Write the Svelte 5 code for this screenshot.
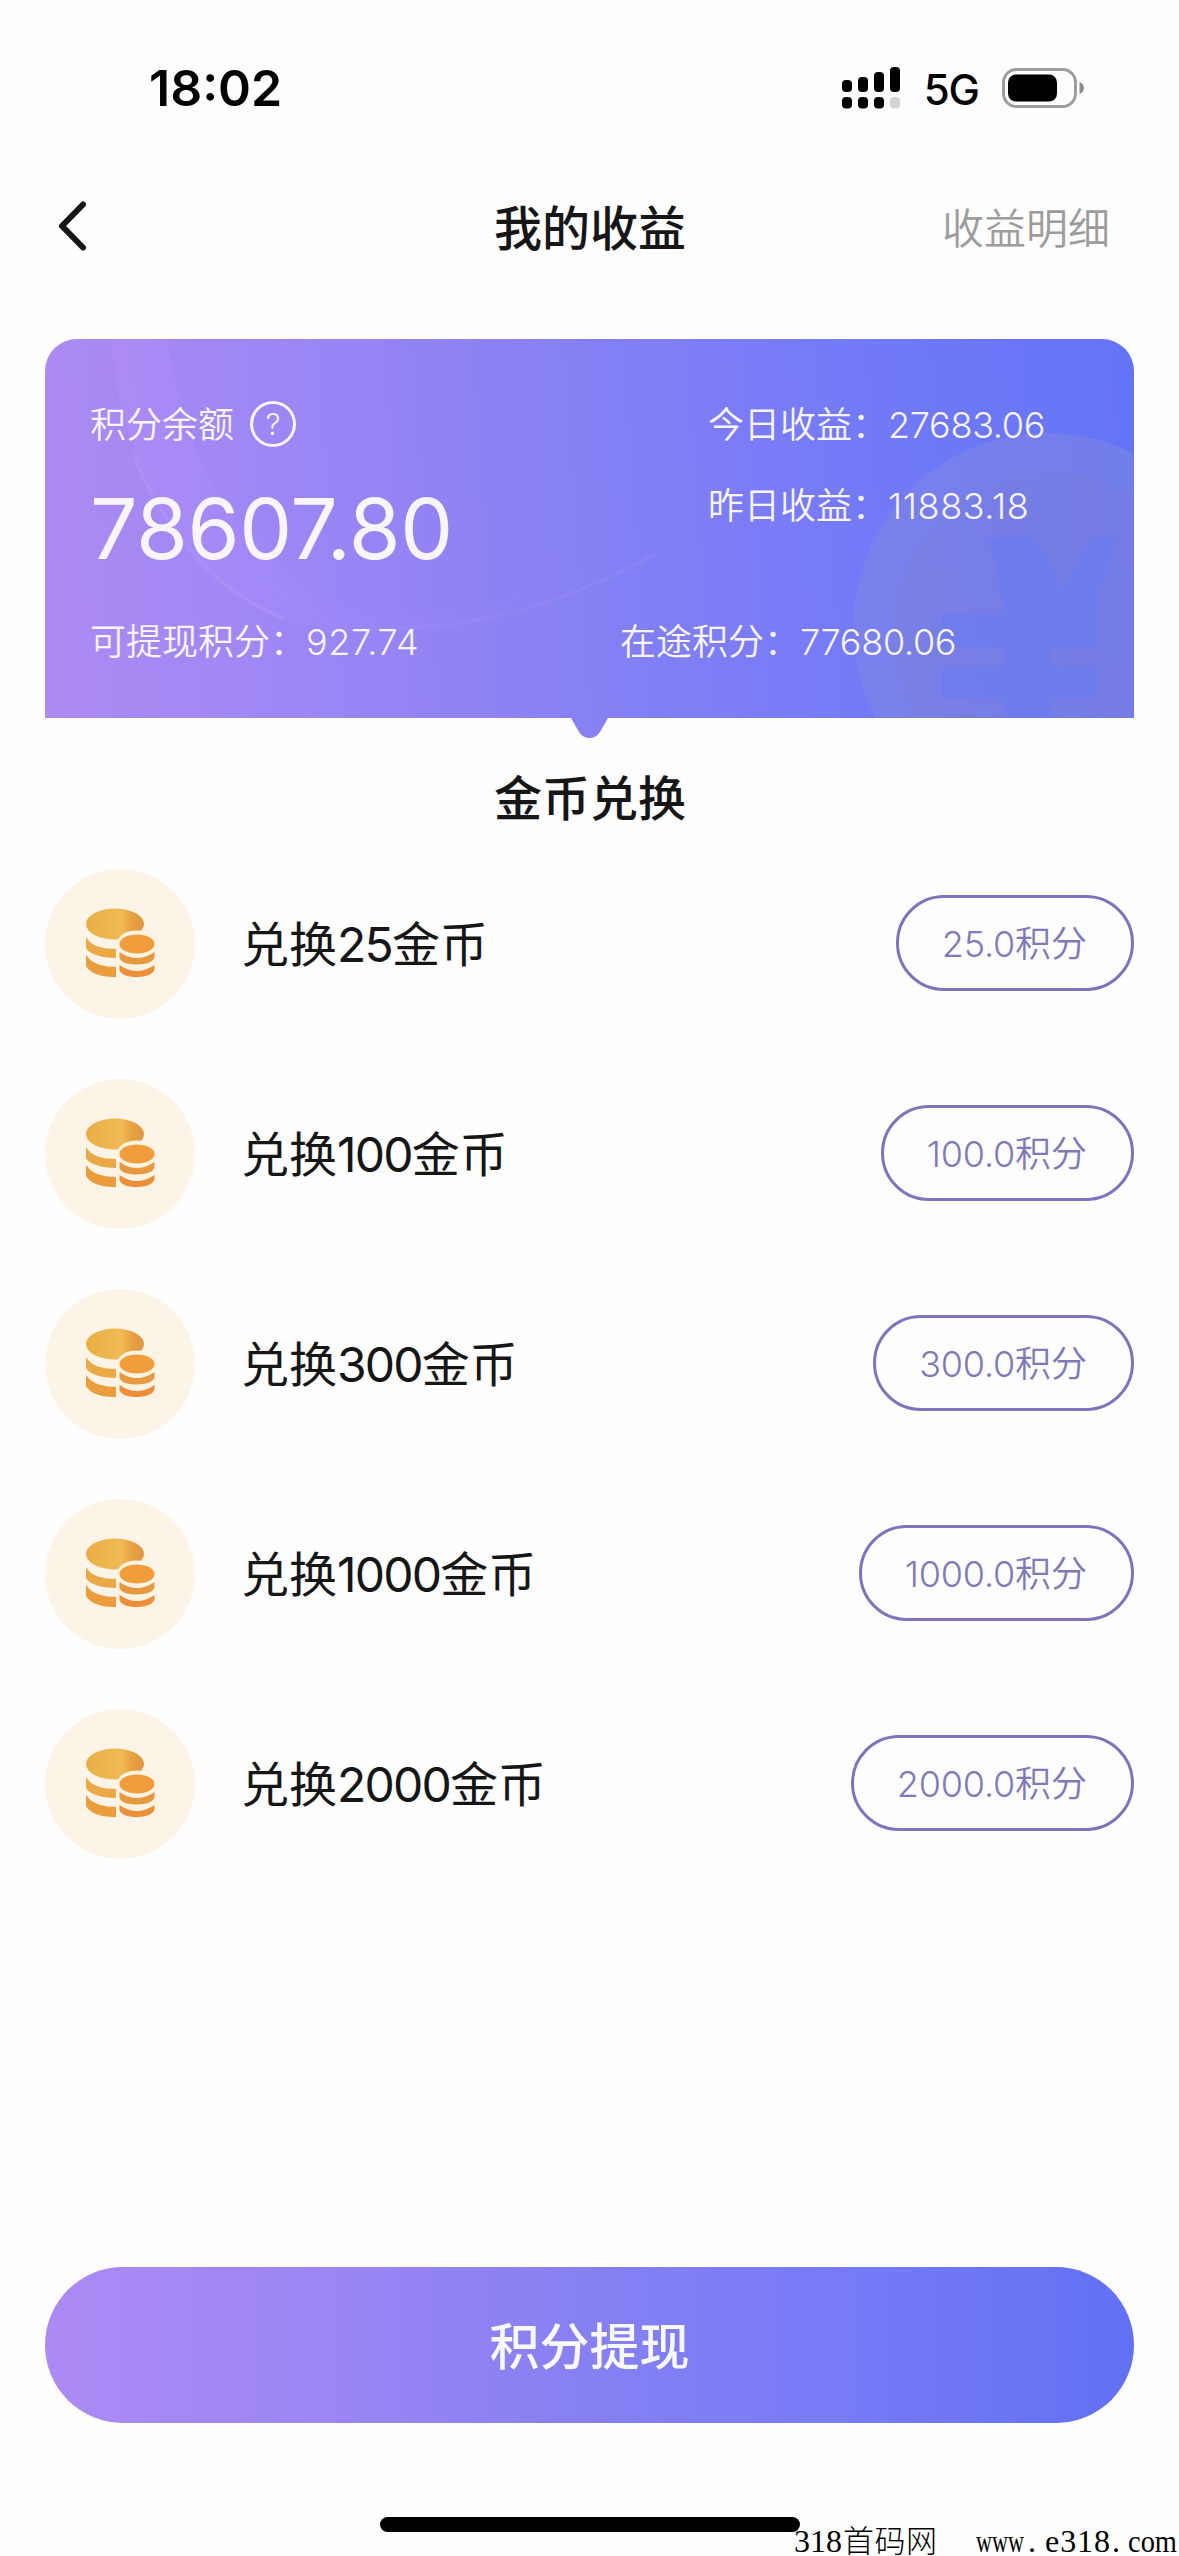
<script>
    const balance = "78607.80"
    const withdrawable = "927.74"
    const pending = "77680.06"
    const today = "27683.06"
    const yesterday = "11883.18"

    const coins = [25, 100, 300, 1000, 2000]
    const bars = [12, 15, 20, 25]
</script>

<div class="page">
    <div class="status">
        <span class="time">18:02</span>
        <div class="status-right">
            <svg class="signal" width="58" height="42" viewBox="0 0 58 42">
                {#each bars as h, i}
                    <rect x={i * 16} y={25 - h} width="10" height={h} rx="4" />
                    <rect x={i * 16} y="30" width="10" height="11.5" rx="4" fill={i === 3 ? "#d4d4d4" : "#000"} />
                {/each}
            </svg>
            <span class="network">5G</span>
            <svg class="battery" width="84" height="40" viewBox="0 0 84 40">
                <rect x="1.5" y="1.5" width="72" height="37" rx="13" fill="none" stroke="#9d9d9d" stroke-width="3" />
                <rect x="6" y="6.500" width="49" height="27" rx="8" />
                <path d="M77.500 14v12c3-1 4.500-3.500 4.500-6s-1.500-5-4.500-6z" fill="#8c8c8c" />
            </svg>
        </div>
    </div>

    <header>
        <svg class="back" width="34" height="54" viewBox="0 0 34 54">
            <path d="M27 5.500L6 27L27 48.500" fill="none" stroke="#161616" stroke-width="6" stroke-linecap="round" stroke-linejoin="round" />
        </svg>
        <h1>我的收益</h1>
        <span class="detail">收益明细</span>
    </header>

    <section class="card">
        <svg class="art" width="1089" height="400" viewBox="0 0 1089 400">
            <defs>
                <linearGradient id="cardFill" gradientUnits="userSpaceOnUse" x1="0" y1="60" x2="1070" y2="-20">
                    <stop offset="0" stop-color="#ab8af2" />
                    <stop offset="0.2" stop-color="#9e87f5" />
                    <stop offset="0.5" stop-color="#8580f4" />
                    <stop offset="0.75" stop-color="#737af7" />
                    <stop offset="1" stop-color="#6474f7" />
                </linearGradient>
                <linearGradient id="swoosh" x1="0" y1="0" x2="1" y2="0">
                    <stop offset="0" stop-color="#b890fc" stop-opacity="0.3" />
                    <stop offset="1" stop-color="#8e86ff" stop-opacity="0.05" />
                </linearGradient>
                <clipPath id="cardShape">
                    <path d="M0 379V32A32 32 0 0 1 32 0H1057A32 32 0 0 1 1089 32V379H563L555 393Q551 399 544.500 399Q538 399 534 393L526 379Z" />
                </clipPath>
            </defs>
            <g clip-path="url(#cardShape)">
                <rect width="1089" height="400" fill="url(#cardFill)" />
                <path d="M66 0C76 120 130 225 230 275C330 315 460 285 560 225C480 262 370 290 290 265C190 215 140 120 122 0Z" fill="url(#swoosh)" />
                <path d="M88 115C120 190 165 250 240 280" fill="none" stroke="#b99cfb" stroke-width="4" opacity="0.4" />
                <path d="M210 235L285 285C390 300 500 275 610 215" fill="none" stroke="#a08df9" stroke-width="4" opacity="0.3" />
                <circle cx="1002" cy="288" r="194" fill="#8088e2" opacity="0.5" />
                <circle cx="1006" cy="294" r="160" fill="#777cdc" opacity="0.4" />
                <path d="M944 198h46l28 52 28-52h28l-20 56v54h-48v20h48v32h-48v52h-46v-52h-64v-32h64v-20h-64v-34h64z" fill="#6b7cf3" opacity="0.6" />
            </g>
        </svg>
        <div class="card-body">
            <div class="card-top">
                <div class="balance">
                    <div class="line">
                        <span>积分余额</span>
                        <span class="help">?</span>
                    </div>
                    <div class="amount">{balance}</div>
                </div>
                <div class="income">
                    <div class="line">今日收益：<span>{today}</span></div>
                    <div class="line">昨日收益：<span class="wide">{yesterday}</span></div>
                </div>
            </div>
            <div class="card-bottom">
                <div class="line withdrawable">可提现积分：<span class="wide">{withdrawable}</span></div>
                <div class="line">在途积分：<span>{pending}</span></div>
            </div>
        </div>
    </section>

    <h2>金币兑换</h2>

    <ul>
        {#each coins as n}
            <li>
                <div class="coin">
                    <svg width="150" height="150" viewBox="0 0 150 150">
                        <defs>
                            <linearGradient id="gold" x1="0" y1="0" x2="1" y2="0">
                                <stop offset="0" stop-color="#ebae45" />
                                <stop offset="0.6" stop-color="#f0ba55" />
                                <stop offset="0.8" stop-color="#e5a143" />
                                <stop offset="1" stop-color="#e2963f" />
                            </linearGradient>
                        </defs>
                        <ellipse cx="70" cy="55" rx="29" ry="15.500" fill="url(#gold)" />
                        <path d="M41 68C46 77 57 80 72 80V89C56 89 44 85 41 79Z" fill="#eaa945" />
                        <path d="M41 86C47 95 58 98 73 98V108C55 109 44 103 41 97Z" fill="#eb9d3c" />
                        <path d="M71 109V78Q72 62 92 61.500Q111 62 112 78V109Z" fill="#fcf3e2" />
                        <ellipse cx="92" cy="75" rx="17.500" ry="9.500" fill="#f29d3b" />
                        <path d="M74.500 83Q92 95 109.500 83V89Q106 95.500 92 95.500Q77 95.500 74.500 89Z" fill="#e6993f" />
                        <path d="M74.500 96Q92 108 109.500 96V101Q106 108 92 108Q77 108 74.500 101Z" fill="#ed8f38" />
                    </svg>
                </div>
                <div class="name">兑换<span>{n}</span>金币</div>
                <div class="price"><span>{n}.0</span>积分</div>
            </li>
        {/each}
    </ul>

    <div class="withdraw">积分提现</div>

    <div class="home"></div>

    <svg class="site" width="387" height="44" viewBox="0 0 387 44">
        <text x="2" y="40" textLength="48">318</text>
        <text x="51" y="40" class="cjk" textLength="94">首码网</text>
        <text x="184" y="40" textLength="48" lengthAdjust="spacingAndGlyphs">www</text>
        <text x="236" y="40">.</text>
        <text x="253" y="40" textLength="65">e318</text>
        <text x="320" y="40">.</text>
        <text x="336" y="40" textLength="49" lengthAdjust="spacingAndGlyphs">com</text>
    </svg>
</div>

<style>
:global(body) {
    margin: 0;
    background: #fefefe;
}
.page {
    position: relative;
    box-sizing: border-box;
    width: 1179px;
    height: 2556px;
    padding: 0 45px;
    overflow: hidden;
    background: #fefefe;
    color: #161616;
    font-family: Inter, "Noto Sans CJK SC", sans-serif;
}
.status {
    display: flex;
    justify-content: space-between;
    align-items: center;
    height: 176px;
    padding: 0 48px 0 104px;
    color: #000;
}
.time {
    font-size: 50px;
    font-weight: 600;
}
.status-right {
    display: flex;
    align-items: center;
}
.network {
    margin: 3px 23px 0 24px;
    font-size: 42px;
    font-weight: 500;
    letter-spacing: -1px;
}
header {
    display: grid;
    grid-template-columns: 1fr auto 1fr;
    align-items: center;
    height: 104px;
}
.back {
    margin: -4px 0 0 11px;
}
h1, h2 {
    margin: 0;
    padding: 2px 0 0 1px;
    font-size: 48px;
    line-height: 60px;
    font-weight: 500;
    text-align: center;
}
.detail {
    justify-self: end;
    margin: 1px 24px 0 0;
    font-size: 42px;
    line-height: 60px;
    font-weight: 350;
    color: #9c9c9c;
}
.card {
    position: relative;
    height: 379px;
    margin-top: 59px;
    color: #f8f5ff;
}
.art {
    position: absolute;
    top: 0;
    left: 0;
}
.card-body {
    position: relative;
    padding: 61px 45px 0 45px;
    font-size: 36px;
    font-weight: 350;
}
.card-top {
    display: flex;
    height: 180px;
}
.balance {
    width: 618px;
}
.line {
    display: flex;
    align-items: center;
    height: 50px;
    line-height: 50px;
}
.income span, .card-bottom span {
    letter-spacing: -0.3px;
}
.income .wide, .card-bottom .wide {
    letter-spacing: 0.6px;
}
.help {
    box-sizing: border-box;
    width: 46px;
    height: 46px;
    margin: -2px 0 0 16px;
    border: 3px solid #f8f5ff;
    border-radius: 50%;
    font-size: 30px;
    line-height: 41px;
    text-align: center;
}
.amount {
    margin-top: 29px;
    font-size: 84px;
    line-height: 100px;
    font-weight: 400;
    letter-spacing: -0.4px;
}
.income .line + .line {
    margin-top: 31px;
}
.card-bottom {
    display: flex;
    margin-top: 37px;
}
.withdrawable {
    width: 530px;
}
h2 {
    margin-top: 49px;
}
ul {
    margin: 10px 0 0;
    padding: 0;
    list-style: none;
}
li {
    display: flex;
    align-items: center;
    height: 210px;
}
.coin {
    width: 150px;
    height: 150px;
    border-radius: 50%;
    background: #fcf4e6;
}
.name {
    flex: 1;
    margin: 2px 0 0 46px;
    font-size: 48px;
    line-height: 70px;
}
.name span {
    letter-spacing: -1.8px;
}
.price {
    box-sizing: border-box;
    height: 96px;
    margin-top: -2px;
    padding: 0 44px 0 43px;
    border: 3px solid #7c75bd;
    border-radius: 48px;
    font-size: 36px;
    line-height: 92px;
    font-weight: 350;
    color: #7f79b9;
}
.price span {
    letter-spacing: -0.2px;
}
.withdraw {
    box-sizing: border-box;
    height: 156px;
    margin-top: 378px;
    padding-top: 2px;
    border-radius: 78px;
    background: linear-gradient(90deg, #ac8af5, #9c86f3 25%, #8680f3 50%, #757af7 75%, #6270f3);
    color: #f8f8ff;
    font-size: 50px;
    line-height: 156px;
    font-weight: 500;
    text-align: center;
}
.home {
    width: 420px;
    height: 15px;
    margin: 94px auto 0;
    border-radius: 8px;
    background: #000;
}
/* overlaps the home indicator, pinned to the screen corner */
.site {
    position: absolute;
    right: 0;
    bottom: 0;
    overflow: visible;
    font-family: "Liberation Serif", serif;
    font-size: 32px;
}
.cjk {
    font-family: "Noto Sans CJK SC", sans-serif;
    font-weight: 300;
    font-size: 31px;
}
</style>
